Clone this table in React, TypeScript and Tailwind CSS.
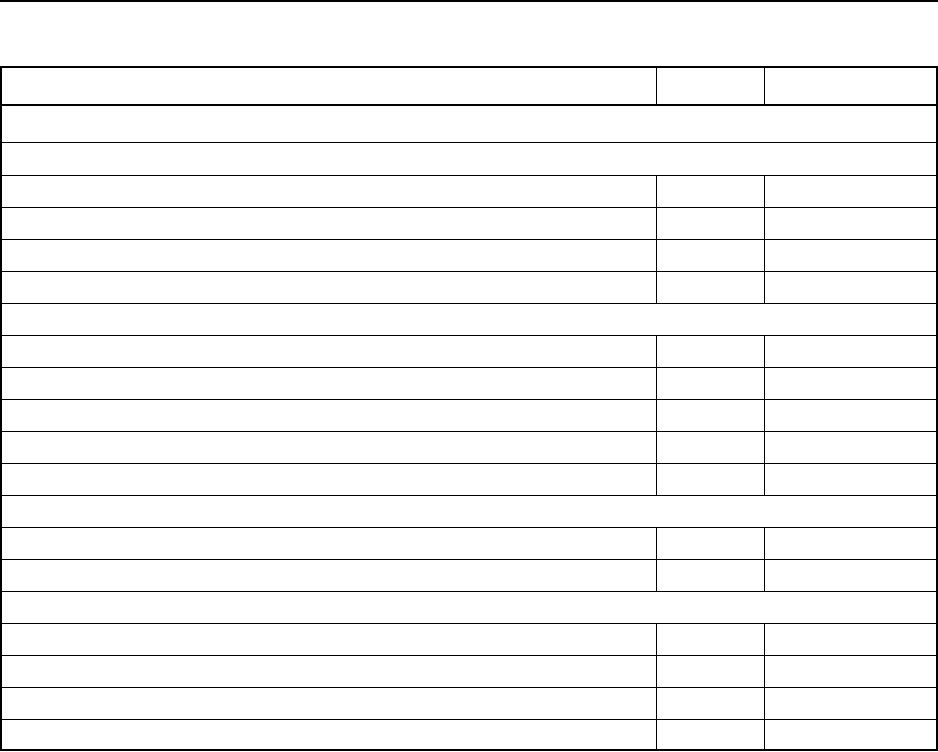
import React from 'react';

type Row = { kind: 'section' } | { kind: 'data' };

const rows: Row[] = [
  { kind: 'section' },
  { kind: 'data' },
  { kind: 'data' },
  { kind: 'data' },
  { kind: 'data' },
  { kind: 'section' },
  { kind: 'data' },
  { kind: 'data' },
  { kind: 'data' },
  { kind: 'data' },
  { kind: 'data' },
  { kind: 'section' },
  { kind: 'data' },
  { kind: 'data' },
  { kind: 'section' },
  { kind: 'data' },
  { kind: 'data' },
  { kind: 'data' },
  { kind: 'data' },
];

const App: React.FC = () => {
  return (
    <div className="w-[938px] bg-white font-['Liberation_Sans',sans-serif]">
      <div className="h-[2px] w-full bg-black" />

      <div className="mt-[64px] border-2 border-black">
        {/* header */}
        <div className="flex h-[38px] border-b-2 border-black">
          <div className="w-[655px] border-r border-black" />
          <div className="w-[108px] border-r border-black" />
          <div className="flex-1" />
        </div>

        {/* first group title */}
        <div className="h-[37px] border-b border-black" />

        {rows.map((row, i) => {
          const last = i === rows.length - 1;
          const h = last
            ? 'h-[29px]'
            : i === 0
              ? 'h-[33px] border-b border-black'
              : 'h-[32px] border-b border-black';
          if (row.kind === 'section') {
            return <div key={i} className={h} />;
          }
          return (
            <div key={i} className={`flex ${h}`}>
              <div className="w-[655px] border-r border-black" />
              <div className="w-[108px] border-r border-black" />
              <div className="flex-1" />
            </div>
          );
        })}
      </div>
    </div>
  );
};

export default App;
